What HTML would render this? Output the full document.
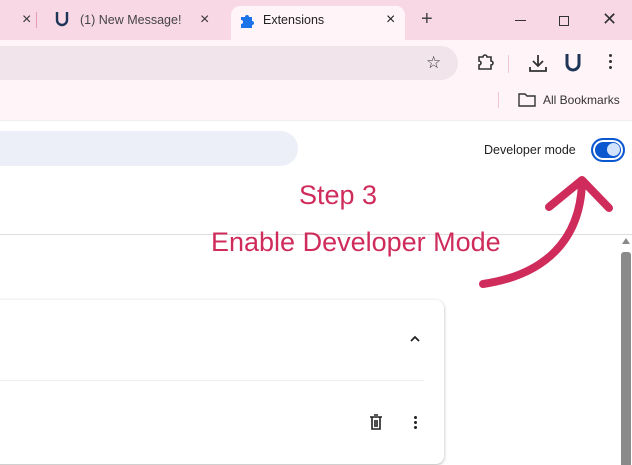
<!DOCTYPE html>
<html><head><style>
body{margin:0;width:632px;height:465px;overflow:hidden;position:relative;background:#fff;font-family:"Liberation Sans",sans-serif}
.a{position:absolute}
</style></head><body>
<div class="a" style="left:0;top:0;width:632px;height:40px;background:#f9d8e6"></div>
<div class="a" style="left:0;top:40px;width:632px;height:80px;background:#fff5f8;border-bottom:1px solid #eee"></div>
<div class="a" style="left:231px;top:6px;width:174px;height:34px;background:#fff5f8;border-radius:9px 9px 0 0"></div>
<div class="a" style="left:22px;top:11px;font-size:16px;color:#333">×</div>
<div class="a" style="left:36px;top:12px;width:1px;height:16px;background:#e79ab8"></div>
<svg class="a" style="left:54px;top:11px" width="16" height="18" viewBox="0 0 16 18"><path d="M3 1v8a5 5 0 0 0 10 0V1" fill="none" stroke="#1d3557" stroke-width="2.4"/></svg>
<div class="a" style="left:80px;top:13px;font-size:12.5px;color:#444">(1) New Message!</div>
<div class="a" style="left:200px;top:11px;font-size:16px;color:#333">×</div>
<svg class="a" style="left:239px;top:12px" width="16" height="16" viewBox="0 0 16 16"><path d="M2 5h4a2 2 0 1 1 4 0h3v4a2 2 0 1 1 0 4v3H2v-4a2 2 0 1 0 0-4z" fill="#1a73e8"/></svg>
<div class="a" style="left:263px;top:13px;font-size:12.5px;color:#222">Extensions</div>
<div class="a" style="left:386px;top:11px;font-size:16px;color:#222">×</div>
<div class="a" style="left:421px;top:8px;font-size:20px;color:#444">+</div>
<div class="a" style="left:515px;top:20px;width:11px;height:1px;background:#333"></div>
<div class="a" style="left:559px;top:16px;width:8px;height:8px;border:1px solid #333"></div>
<div class="a" style="left:602px;top:9px;font-size:18px;color:#333">✕</div>
<div class="a" style="left:0;top:46px;width:458px;height:34px;background:#f1e4eb;border-radius:0 17px 17px 0"></div>
<div class="a" style="left:426px;top:53px;font-size:17px;color:#333">☆</div>
<svg class="a" style="left:476px;top:54px" width="18" height="18" viewBox="0 0 18 18"><path d="M3 3h4a2 2 0 0 1 4 0h4v4a2 2 0 0 1 0 4v4H3v-4a2 2 0 0 0 0-4z" fill="none" stroke="#333" stroke-width="1.6"/></svg>
<div class="a" style="left:508px;top:55px;width:1px;height:18px;background:#f2c4d6"></div>
<svg class="a" style="left:528px;top:54px" width="20" height="18" viewBox="0 0 20 18"><path d="M10 1v10M5 7l5 5 5-5M2 13v4h16v-4" fill="none" stroke="#333" stroke-width="1.8"/></svg>
<svg class="a" style="left:564px;top:53px" width="18" height="22" viewBox="0 0 18 22"><path d="M3 1v10a6 6 0 0 0 12 0V1" fill="none" stroke="#1d3557" stroke-width="3"/></svg>
<div class="a" style="left:609px;top:54px;width:3px;height:3px;border-radius:2px;background:#333;box-shadow:0 6px #333,0 12px #333"></div>
<div class="a" style="left:498px;top:92px;width:1px;height:16px;background:#f2c4d6"></div>
<svg class="a" style="left:518px;top:93px" width="18" height="14" viewBox="0 0 18 14"><path d="M1 1h6l2 2h8v10H1z" fill="none" stroke="#333" stroke-width="1.4"/></svg>
<div class="a" style="left:543px;top:93px;font-size:12px;color:#333">All Bookmarks</div>
<div class="a" style="left:0;top:131px;width:298px;height:35px;background:#eceef8;border-radius:0 18px 18px 0"></div>
<div class="a" style="left:484px;top:143px;font-size:12.5px;color:#222">Developer mode</div>
<div class="a" style="left:591px;top:138px;width:34px;height:24px;box-sizing:border-box;border:2px solid #0b57d0;border-radius:12px;background:#0b57d0;box-shadow:inset 0 0 0 2px #fff"></div>
<div class="a" style="left:607px;top:143px;width:13px;height:13px;border-radius:7px;background:#d3e3fd"></div>
<div class="a" style="left:0;top:234px;width:632px;height:1px;background:#ddd"></div>
<div class="a" style="left:299px;top:180px;font-size:27px;color:#cf2c5c">Step 3</div>
<div class="a" style="left:211px;top:227px;font-size:27px;color:#cf2c5c">Enable Developer Mode</div>
<svg class="a" style="left:470px;top:170px" width="150" height="125" viewBox="470 170 150 125"><path d="M483 284C545 275 580 240 582 183M549 207L582 180L609 208" fill="none" stroke="#cf2c5c" stroke-width="8" stroke-linecap="round" stroke-linejoin="round"/></svg>
<div class="a" style="left:622px;top:238px;width:0;height:0;border:4px solid transparent;border-bottom:6px solid #888;border-top:0"></div>
<div class="a" style="left:621px;top:252px;width:10px;height:213px;background:#8a8a8a;border-radius:3px 3px 0 0"></div>
<div class="a" style="left:-10px;top:300px;width:454px;height:164px;background:#fff;border-radius:8px;box-shadow:0 1px 3px rgba(0,0,0,.3)"></div>
<svg class="a" style="left:408px;top:334px" width="14" height="10" viewBox="0 0 14 10"><path d="M3 7l4-4 4 4" fill="none" stroke="#222" stroke-width="1.8"/></svg>
<div class="a" style="left:0;top:380px;width:424px;height:1px;background:#eee"></div>
<svg class="a" style="left:369px;top:414px" width="14" height="16" viewBox="0 0 14 16"><path d="M1 3h12M5 1h4M3 3v12h8V3M6 6v7M8 6v7" fill="none" stroke="#222" stroke-width="1.6"/></svg>
<div class="a" style="left:414px;top:416px;width:3px;height:3px;border-radius:2px;background:#222;box-shadow:0 5px #222,0 10px #222"></div>
</body></html>
